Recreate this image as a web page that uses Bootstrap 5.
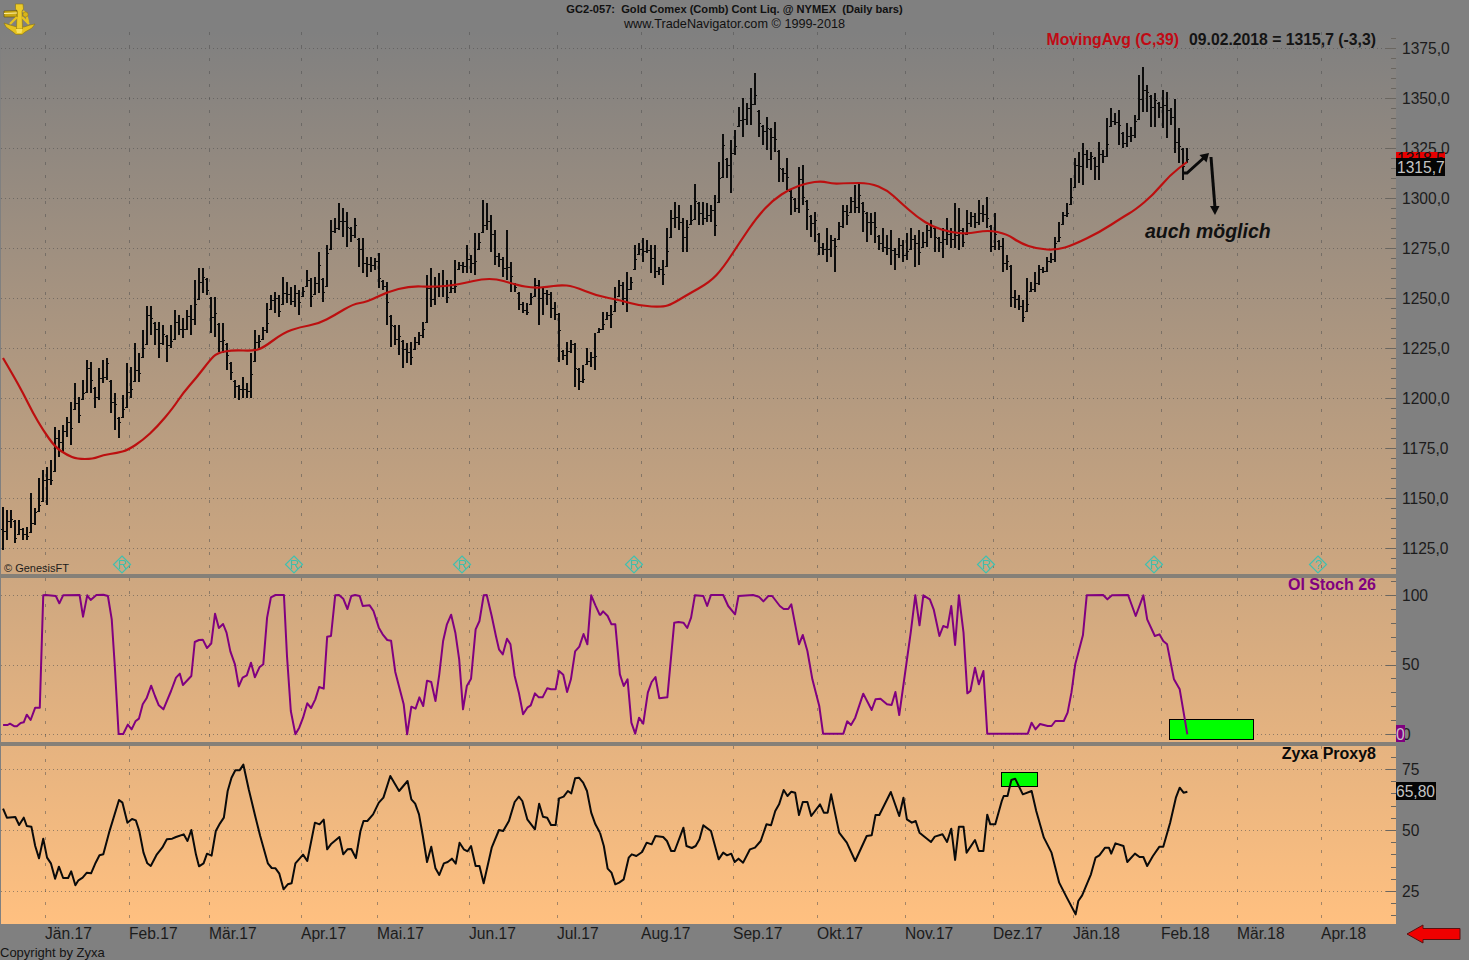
<!DOCTYPE html>
<html lang="de">
<head>
<meta charset="utf-8">
<title>GC2-057 Gold Comex</title>
<link href="https://cdn.jsdelivr.net/npm/bootstrap@5.3.0/dist/css/bootstrap.min.css" rel="stylesheet">
<style>
html,body{margin:0;background:#808080;overflow:hidden}
.screen{width:1469px;height:960px;background:#808080;font-family:"Liberation Sans",Arial,sans-serif;color:#111}
.title-bar{height:32px;padding-top:3px}
.title-main{font-size:11.1px;font-weight:700;line-height:13px;white-space:pre;color:#111}
.title-sub{font-size:12.7px;line-height:16px;color:#111}
.brand-logo{left:3px;top:3px;width:33px;height:33px}
.chart-row{height:892px}
.plot-col{width:1396px;background:linear-gradient(to bottom,#808080 0%,#ffc080 100%);box-shadow:inset 1px 0 0 #808080}
.axis-col{width:73px}
.pane-gap{height:4px;background:#858078}
.axis-gap{height:4px}
.screen svg{display:block;overflow:visible}
svg text{font-family:"Liberation Sans",Arial,sans-serif}
.axis-label{font-size:15.6px;fill:#1c1c1c}
.value-flag{font-size:15.6px;fill:#c4c4c4}
.head-label{font-size:16px;font-weight:700}
.head-ma{font-size:15.75px;font-weight:700}
.hand-note{font-size:19.5px;font-weight:700;font-style:italic;fill:#111}
.small-note{font-size:11px;fill:#1c1c1c}
.foot-note{font-size:13px;fill:#141414}
.marker-char{font-size:13px;fill:#3fc0b0;text-anchor:middle}
.marker-shape{fill:none;stroke:#3fc0b0;stroke-width:1.2}
.grid-v{stroke:#4c4c4c;stroke-opacity:.5;stroke-width:1;stroke-dasharray:3 10;fill:none}
.grid-h{stroke:#4c4c4c;stroke-opacity:.55;stroke-width:1;stroke-dasharray:1 3;fill:none}
.tick-mark{stroke:#6a6660;stroke-width:1;fill:none}
.line-ma{fill:none;stroke:#bc0f0f;stroke-width:2.2;stroke-linejoin:round}
.line-stoch{fill:none;stroke:#800080;stroke-width:2;vector-effect:non-scaling-stroke;stroke-linejoin:round}
.line-proxy{fill:none;stroke:#0a0a0a;stroke-width:2;vector-effect:non-scaling-stroke;stroke-linejoin:round}
.signal-box{fill:#00ff00;stroke:#000;stroke-width:1}
</style>
</head>
<body>
<div class="screen d-flex flex-column position-relative">
  <svg class="brand-logo position-absolute" viewBox="0 0 33 33" aria-label="Sextant">
    <path d="M1 20 L7 22 L14 24 L21 24 L27 22 L32 21 L29 25 L22 29 L19 31.5 L13 31.5 L10 29 L3 24Z" fill="#e6c21e" stroke="#8a7410" stroke-width=".6"/>
    <path d="M12.5 1 L20 1 L20.5 6 L19 8 L19.5 26 L13.5 26 L14 8 L12.5 6Z" fill="#eccb2a" stroke="#8a7410" stroke-width=".6"/>
    <path d="M1 8 L14 7.5 L14 14 L1 14Z" fill="#c9a814" stroke="#5e4e08" stroke-width=".6"/>
    <path d="M1 10.5 L14 10" stroke="#fff0a0" stroke-width="1.2"/>
    <path d="M14 14 L7 21 M19 14 L26 21 M20 8 L23 11 L25 19" fill="none" stroke="#e6c21e" stroke-width="2.4"/>
    <circle cx="22.5" cy="11.5" r="2.6" fill="#d8b41a" stroke="#8a7410" stroke-width=".5"/>
    <path d="M13 26 L19.5 26 L18.5 30 L14 30Z" fill="#f7e060"/>
  </svg>
  <div class="title-bar text-center flex-shrink-0">
    <div class="title-main">GC2-057:  Gold Comex (Comb) Cont Liq. @ NYMEX  (Daily bars)</div>
    <div class="title-sub">www.TradeNavigator.com © 1999-2018</div>
  </div>

  <div class="chart-row d-flex flex-shrink-0">
    <div class="plot-col d-flex flex-column">
      <!-- price pane -->
      <svg width="1396" height="542" viewBox="0 32 1396 542">
        <path class="grid-h" data-h="48,98,148,198,248,298,348,398,448,498,548"/>
        <path class="grid-v" data-top="32" data-bot="574"/>
        <path class="tick-mark" data-major="48,98,148,198,248,298,348,398,448,498,548" data-step="10" data-top="38" data-bot="574"/>
        <path id="priceBars" fill="none" stroke="#0c0c0c" stroke-width="2" shape-rendering="crispEdges"/>
        <path id="priceTicks" fill="none" stroke="#0c0c0c" stroke-width="1" shape-rendering="crispEdges"/>
        <path id="maLine" class="line-ma" data-pts="3,358 13,375 23,393 33,413 43,430 55,447 67,455 77,459 93,459 103,455 117,453 128,450 143,440 157,427 173,408 183,393 197,377 210,360 217,353 233,350 253,351 263,348 283,333 300,327 318,324 335,315 353,304 367,302 387,292 410,286 433,287 457,285 490,277 517,285 533,288 547,287 560,285 573,286 597,296 620,300 640,306 663,307 672,304 687,295 710,282 723,268 740,242 757,217 773,200 790,189 807,183 822,181 833,184 847,183 870,183 887,190 900,202 917,217 933,227 950,232 967,234 988,230 1007,234 1020,243 1037,249 1057,250 1073,245 1100,232 1123,217 1135,210 1153,195 1170,175 1187,162"/>
        <path d="M1183 173 L1187 173 L1207 155" fill="none" stroke="#0a0a0a" stroke-width="3"/>
        <path d="M1209 153 L1199.5 155 L1206.5 162.5Z" fill="#0a0a0a"/>
        <path d="M1211 157 L1215 208" fill="none" stroke="#0a0a0a" stroke-width="3"/>
        <path d="M1210 206 L1219.5 206 L1215 215Z" fill="#0a0a0a"/>
        <text class="hand-note" x="1145" y="238">auch möglich</text>
        <text class="head-ma" x="1376" y="45" text-anchor="end"><tspan fill="#c00a14">MovingAvg (C,39)</tspan><tspan fill="#141414" dx="10">09.02.2018 = 1315,7 (-3,3)</tspan></text>
        <text class="small-note" x="4" y="572">© GenesisFT</text>
        <g id="eventMarks"></g>
      </svg>
      <div class="pane-gap flex-shrink-0"></div>
      <!-- OI Stoch pane -->
      <svg width="1396" height="164" viewBox="0 578 1396 164">
        <path class="grid-h" data-h="595,665,734"/>
        <path class="grid-v" data-top="578" data-bot="742"/>
        <path class="tick-mark" data-major="595,665,734" data-step="13.9" data-top="581" data-bot="742"/>
        <rect class="signal-box" x="1169.5" y="719.5" width="84" height="20"/>
        <g transform="translate(0 576) scale(.38265 .33333)">
          <polyline class="line-stoch" points="8,447 20,447 26,443 38,451 44,451 54,441 62,439 70,416 80,432 92,395 104,395 113,58 120,57 146,60 155,82 165,58 208,57 217,122 228,58 237,72 252,57 270,56 282,60 292,130 300,270 310,474 322,474 334,446 344,460 354,436 363,428 373,385 383,367 395,329 405,360 415,388 427,400 447,345 460,305 470,293 478,327 500,300 509,198 520,192 530,191 541,216 552,203 562,113 572,156 583,144 592,170 602,226 614,265 624,331 634,305 645,298 656,260 666,304 678,274 688,265 698,125 708,64 720,57 742,57 750,240 760,405 772,475 782,455 792,425 803,382 813,396 824,370 834,333 846,338 855,182 865,180 876,58 886,57 897,68 908,99 918,60 928,57 940,60 948,90 966,88 976,105 990,155 1000,175 1012,192 1022,194 1033,288 1055,385 1064,475 1075,392 1086,398 1096,364 1106,390 1116,314 1127,318 1138,375 1148,295 1158,195 1168,145 1179,116 1190,170 1200,250 1210,400 1220,330 1231,308 1243,160 1253,135 1264,58 1272,57 1285,120 1296,180 1304,220 1314,235 1325,188 1334,205 1345,300 1356,350 1367,415 1378,395 1387,388 1398,352 1408,364 1418,364 1430,337 1440,340 1452,340 1461,285 1472,296 1482,348 1492,310 1503,226 1514,212 1525,174 1535,205 1545,58 1556,88 1568,118"/>
        </g>
        <g transform="translate(600 576) scale(.38265 .33333)">
          <polyline class="line-stoch" points="0,118 8,106 20,120 30,145 40,145 52,295 62,330 72,310 82,440 92,473 102,425 113,443 125,350 135,318 145,303 155,367 176,364 194,140 205,138 218,140 228,156 238,125 248,58 270,60 280,90 290,57 322,57 335,90 353,115 362,60 400,57 415,62 427,76 440,60 450,60 470,90 480,99 492,99 500,85 520,205 530,177 542,225 555,310 573,390 583,473 636,473 646,436 656,447 667,425 688,353 710,402 720,370 733,368 750,385 762,387 772,348 782,417 812,170 824,58 835,148 845,58 862,70 872,100 887,180 897,150 908,155 918,90 928,207 938,58 950,170 960,352 968,345 980,275 990,325 1002,285 1012,473 1118,473 1128,440 1138,460 1150,444 1170,450 1180,450 1190,435 1212,435 1222,410 1232,350 1242,265 1262,178 1272,58 1315,57 1326,70 1338,58 1380,57 1400,120 1420,58 1430,130 1450,180 1462,175 1472,195 1482,205 1500,310 1515,340 1535,475"/>
        </g>
        <text class="head-label" x="1376" y="590" text-anchor="end" fill="#800080">OI Stoch 26</text>
      </svg>
      <div class="pane-gap flex-shrink-0"></div>
      <!-- Zyxa pane -->
      <svg width="1396" height="178" viewBox="0 746 1396 178">
        <path class="grid-h" data-h="769,830,891"/>
        <path class="grid-v" data-top="746" data-bot="924"/>
        <path class="tick-mark" data-major="769,830,891" data-step="12.2" data-top="748" data-bot="924"/>
        <rect class="signal-box" x="1001.5" y="772.5" width="36" height="14"/>
        <g transform="translate(0 576) scale(.38265 .33333)">
          <polyline class="line-proxy" points="8,698 18,725 40,723 50,747 62,725 70,750 82,752 92,810 102,847 113,788 123,845 133,862 144,908 154,872 165,906 178,906 186,886 197,928 205,913 216,905 227,890 238,892 250,860 260,838 270,835 285,770 311,672 320,680 333,740 345,729 355,733 364,765 375,830 385,862 394,870 410,835 424,815 436,790 450,788 460,783 480,775 490,795 500,762 512,835 520,871 532,862 541,833 553,839 564,765 575,742 585,725 595,645 605,605 615,583 626,583 636,566 650,640 668,725 680,780 700,862 710,876 720,877 730,893 741,940 752,925 762,922 772,862 792,836 803,855 823,740 835,745 846,731 855,820 866,803 887,783 897,835 908,820 918,819 930,846 942,765 950,735 960,735 975,715 990,680 1002,665 1020,600 1043,645 1065,615 1075,670 1085,683 1095,715 1105,780 1116,858 1127,812 1138,877 1148,897 1160,862 1170,858 1181,848 1191,863 1201,800 1212,820 1222,826 1231,810 1243,870 1253,870 1264,922 1285,815 1304,762 1315,765 1330,735 1345,678 1356,662 1365,675 1378,730 1398,760 1409,683 1419,722 1430,725 1440,747 1452,747 1461,667 1473,662 1484,645 1493,652 1503,607 1513,605 1524,620 1534,645 1545,710 1556,745 1568,770"/>
        </g>
        <g transform="translate(600 576) scale(.38265 .33333)">
          <polyline class="line-proxy" points="0,770 10,810 20,878 30,890 40,925 50,920 62,910 75,845 83,835 95,840 110,828 122,800 135,805 145,780 165,783 175,795 186,825 195,825 218,755 226,810 240,816 250,810 260,790 270,748 290,765 310,850 322,830 332,838 343,833 352,858 362,848 374,860 392,820 405,815 420,795 435,745 447,748 458,705 468,685 480,642 490,660 500,647 510,650 520,717 530,678 542,678 552,720 575,685 585,710 595,710 604,655 625,770 645,800 667,855 697,780 710,778 720,717 730,717 760,648 782,720 793,665 802,730 815,740 825,735 835,770 865,798 875,782 895,775 907,798 918,758 928,852 938,752 950,752 958,830 980,792 990,825 1002,825 1012,716 1020,745 1033,745 1050,675 1055,660 1065,660 1075,612 1085,608 1105,655 1128,645 1140,705 1160,785 1180,830 1200,920 1220,965 1243,1015 1250,975 1260,958 1283,895 1295,845 1305,838 1320,815 1330,815 1336,833 1347,802 1368,810 1378,858 1398,833 1410,843 1420,843 1430,870 1445,840 1462,812 1472,812 1490,740 1505,665 1515,635 1525,650 1535,647"/>
        </g>
        <text class="head-label" x="1376" y="759" text-anchor="end" fill="#0a0a0a">Zyxa Proxy8</text>
      </svg>
    </div>

    <div class="axis-col d-flex flex-column">
      <svg width="73" height="542" viewBox="1396 32 73 542">
        <g class="axis-label">
          <text x="1402" y="54">1375,0</text><text x="1402" y="104">1350,0</text><text x="1402" y="154">1325,0</text>
          <text x="1402" y="204">1300,0</text><text x="1402" y="254">1275,0</text><text x="1402" y="304">1250,0</text>
          <text x="1402" y="354">1225,0</text><text x="1402" y="404">1200,0</text><text x="1402" y="454">1175,0</text>
          <text x="1402" y="504">1150,0</text><text x="1402" y="554">1125,0</text>
        </g>
        <rect x="1396" y="152" width="49" height="10" fill="#e80000"/>
        <text x="1397" y="164" font-size="15.6" fill="#111">1318,5</text>
        <rect x="1396" y="158" width="49" height="18" fill="#050505"/>
        <text class="value-flag" x="1397" y="173">1315,7</text>
      </svg>
      <div class="axis-gap flex-shrink-0"></div>
      <svg width="73" height="164" viewBox="1396 578 73 164">
        <g class="axis-label">
          <text x="1402" y="601">100</text><text x="1402" y="670">50</text><text x="1402" y="740">0</text>
        </g>
        <rect x="1396" y="725" width="9" height="17" fill="#800080"/>
        <text x="1396" y="740" font-size="15.6" fill="#c4c4c4">0</text>
      </svg>
      <div class="axis-gap flex-shrink-0"></div>
      <svg width="73" height="178" viewBox="1396 746 73 178">
        <g class="axis-label">
          <text x="1402" y="775">75</text><text x="1402" y="836">50</text><text x="1402" y="897">25</text>
        </g>
        <rect x="1396" y="782" width="40" height="18" fill="#050505"/>
        <text class="value-flag" x="1396" y="797">65,80</text>
      </svg>
    </div>
  </div>

  <svg width="1469" height="36" viewBox="0 924 1469 36" class="flex-shrink-0">
    <g class="axis-label">
      <text x="45" y="939">Jän.17</text><text x="129" y="939">Feb.17</text><text x="209" y="939">Mär.17</text>
      <text x="301" y="939">Apr.17</text><text x="377" y="939">Mai.17</text><text x="469" y="939">Jun.17</text>
      <text x="557" y="939">Jul.17</text><text x="641" y="939">Aug.17</text><text x="733" y="939">Sep.17</text>
      <text x="817" y="939">Okt.17</text><text x="905" y="939">Nov.17</text><text x="993" y="939">Dez.17</text>
      <text x="1073" y="939">Jän.18</text><text x="1161" y="939">Feb.18</text><text x="1237" y="939">Mär.18</text>
      <text x="1321" y="939">Apr.18</text>
    </g>
    <text class="foot-note" x="0" y="957">Copyright by Zyxa</text>
    <path d="M1407 934 L1423 925 L1423 928.5 L1460 928.5 L1460 939.5 L1423 939.5 L1423 943Z" fill="#f00000" stroke="#5a1010" stroke-width="1"/>
  </svg>
</div>

<script>
(function(){
  var gridX=[45,129,209,301,377,469,557,641,733,817,905,993,1073,1161,1237,1321];
  document.querySelectorAll('.grid-v').forEach(function(p){
    var t=+p.dataset.top,b=+p.dataset.bot;
    p.setAttribute('d',gridX.map(function(x){return 'M'+(x+.5)+' '+t+'V'+b;}).join(''));
  });
  document.querySelectorAll('.grid-h').forEach(function(p){
    p.setAttribute('d',p.dataset.h.split(',').map(function(y){return 'M1 '+(+y+.5)+'H1386';}).join(''));
  });
  document.querySelectorAll('.tick-mark').forEach(function(p){
    var maj=p.dataset.major.split(',').map(Number),s=+p.dataset.step,t=+p.dataset.top,b=+p.dataset.bot,d='';
    maj.forEach(function(y){d+='M1386 '+(y+.5)+'H1396';});
    for(var y=maj[0]-s*Math.floor((maj[0]-t)/s);y<b;y+=s){
      var ry=Math.round(y);
      if(!maj.some(function(m){return Math.abs(m-ry)<2;})) d+='M1391 '+(ry+.5)+'H1396';
    }
    p.setAttribute('d',d);
  });
  var ma=document.getElementById('maLine'),pts=ma.dataset.pts.split(' ').map(function(s){return s.split(',').map(Number);});
  var md='M'+pts[0][0]+' '+pts[0][1];
  for(var j=1;j<pts.length-1;j++){
    md+='Q'+pts[j][0]+' '+pts[j][1]+' '+((pts[j][0]+pts[j+1][0])/2)+' '+((pts[j][1]+pts[j+1][1])/2);
  }
  md+='L'+pts[pts.length-1][0]+' '+pts[pts.length-1][1];
  ma.setAttribute('d',md);
  var B=[507,550,510,540,510,528,520,543,520,535,528,540,527,540,493,533,508,525,478,512,470,502,467,505,460,485,427,472,430,457,425,452,417,437,402,445,383,410,397,423,380,400,360,393,362,393,387,408,368,400,360,383,358,380,380,413,393,430,417,438,395,418,363,408,367,398,343,382,353,382,330,358,
  306,345,306,335,322,345,322,358,325,345,335,362,325,348,310,340,315,335,318,338,310,330,305,335,280,325,268,300,
  268,293,278,295,297,333,297,337,323,352,323,353,343,370,362,380,380,398,385,400,377,398,383,398,353,398,330,362,335,348,327,340,303,333,295,310,292,313,295,317,277,305,282,303,287,305,285,307,290,315,287,297,270,287,278,307,277,295,252,293,278,302,245,287,220,250,218,233,203,230,208,237,212,247,227,242,218,238,238,267,238,273,257,277,257,272,258,270,253,288,280,290,282,325,315,347,325,345,325,355,340,368,343,363,342,365,337,350,332,345,322,338,275,323,268,307,277,305,273,297,270,297,280,303,280,293,260,293,262,270,262,273,245,273,255,273,233,275,233,250,200,233,203,230,215,252,230,265,253,267,257,277,230,280,262,292,283,292,292,310,302,313,303,315,293,305,278,297,280,325,287,315,290,305,292,318,302,320,313,362,350,360,342,365,340,353,343,387,368,390,365,383,348,365,352,367,333,370,328,333,312,330,312,320,305,328,287,312,280,297,282,305,272,312,277,290,245,270,243,255,
  238,262,240,253,245,273,245,278,267,275,260,285,228,267,210,238,202,228,205,230,218,252,220,252,205,225,184,220,202,225,202,225,203,222,205,222,195,236,162,203,134,178,158,178,140,193,130,155,107,127,98,137,103,125,88,125,73,105,110,137,125,145,117,150,128,160,122,152,150,182,168,182,158,190,190,215,198,212,167,213,165,205,200,230,215,237,212,242,233,255,243,255,228,262,235,257,238,272,222,240,205,228,205,225,197,213,185,213,183,213,202,232,212,242,213,235,212,243,235,250,228,252,235,255,230,265,248,270,238,258,240,262,233,260,228,250,235,267,230,265,232,248,225,247,220,238,227,252,237,252,228,258,218,245,228,248,203,248,208,250,228,247,210,235,212,227,213,228,200,225,205,222,197,228,225,252,213,250,240,250,238,272,255,270,265,307,290,308,295,310,300,322,278,312,282,292,272,292,265,285,
  267,273,257,272,253,263,237,262,222,242,212,225,203,217,178,205,158,188,152,183,143,185,150,168,152,170,157,180,142,180,150,163,118,157,108,127,113,125,110,145,132,148,123,147,127,142,115,138,75,120,67,112,85,112,95,127,93,127,102,118,90,128,92,138,108,125,99,153,128,163,148,180,148,163];
  var d='',t='',seed=7,close=null;
  function rnd(){seed=(seed*1103515245+12345)&2147483647;return seed/2147483647;}
  for(var i=0;i*2<B.length;i++){
    var x=3+4*i,a=B[2*i],b=B[2*i+1];
    d+='M'+x+' '+a+'V'+b;
    var open=close===null?a+(b-a)*.5:Math.min(b-1,Math.max(a+1,close));
    close=a+(b-a)*(.2+.6*rnd());
    t+='M'+(x-2)+' '+(Math.round(open)+.5)+'H'+(x-1)+'M'+(x+1)+' '+(Math.round(close)+.5)+'H'+(x+2);
  }
  document.getElementById('priceBars').setAttribute('d',d);
  document.getElementById('priceTicks').setAttribute('d',t);
  var marks=[[122,'R'],[294,'R'],[462,'R'],[634,'R'],[986,'R'],[1154,'R'],[1318,'?']],h='';
  marks.forEach(function(m){
    var x=m[0];
    h+='<polygon class="marker-shape" points="'+x+',556 '+(x+8.5)+',564.5 '+x+',573 '+(x-8.5)+',564.5"/>'+
       '<text class="marker-char" x="'+x+'" y="569">'+m[1]+'</text>';
  });
  document.getElementById('eventMarks').innerHTML=h;
})();
</script>
<script src="https://cdn.jsdelivr.net/npm/bootstrap@5.3.0/dist/js/bootstrap.bundle.min.js"></script>
</body>
</html>
